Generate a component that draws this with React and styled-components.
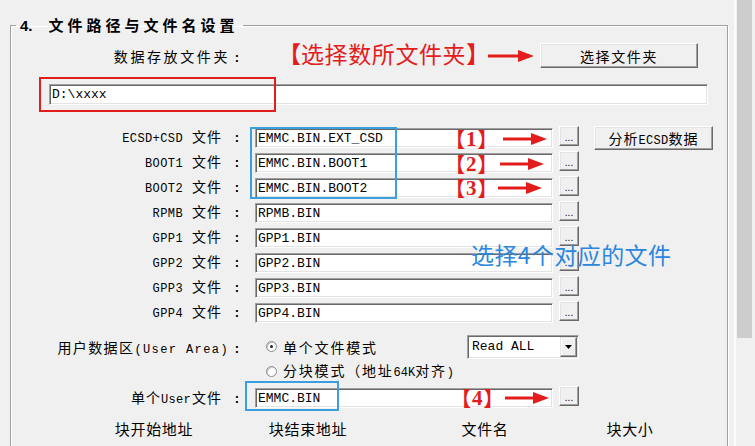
import React from 'react';
import styled, { createGlobalStyle } from 'styled-components';

const CJK = `"Noto Sans CJK SC", "Noto Sans", sans-serif`;
const MONO = `"Liberation Mono", "DejaVu Sans Mono", monospace`;
const RED = '#e31c1c';
const BLUE_FRAME = '#3a9fdc';

const GlobalStyle = createGlobalStyle`
  html, body {
    margin: 0;
    padding: 0;
    background: #f0f0f0;
    overflow: hidden;
  }
  body {
    font-family: ${CJK};
    color: #000;
  }
  * { box-sizing: border-box; }
`;

const Window = styled.div`
  display: flex;
  width: 755px;
  height: 446px;
  overflow: hidden;
  background: #f0f0f0;
`;

const Main = styled.main`
  flex: 1;
  min-width: 0;
  padding: 16px 6px 0 10px;
`;

const GroupBox = styled.fieldset`
  margin: 0;
  padding: 0;
  min-width: 0;
  height: 480px;
  border: 1px solid #a0a0a0;
  box-shadow: 1px 1px 0 #fff, inset 1px 1px 0 #fff;
`;

const Legend = styled.legend`
  margin-left: 5px;
  padding: 0 4px;
  font-family: ${CJK};
  font-size: 15px;
  font-weight: 700;
  line-height: 18px;
  letter-spacing: 4px;
  white-space: nowrap;
`;

const LegendNum = styled.span`
  font-family: "Liberation Sans", sans-serif;
  letter-spacing: 0;
  margin-right: 16px;
`;

/* ---------- labels ---------- */

const FieldLabel = styled.div`
  flex: none;
  width: 230px;
  height: ${p => p.$h || 20}px;
  padding-top: ${p => ((p.$h || 20) - 20) / 2}px;
  margin-top: ${p => p.$offset || 0}px;
  display: flex;
  justify-content: flex-end;
  align-items: baseline;
  white-space: nowrap;
`;

const Caption = styled.span`
  font-family: ${CJK};
  font-size: 14px;
  line-height: 20px;
  letter-spacing: ${p => p.$sp ?? 1}px;
  margin-left: ${p => p.$gap || 0}px;
`;

const Code = styled.span`
  font-family: ${MONO};
  font-size: 12px;
  line-height: 20px;
  letter-spacing: ${p => p.$sp ?? 0.4}px;
  margin-left: ${p => p.$gap || 0}px;
`;

const Colon = styled.span`
  display: inline-block;
  width: 8px;
  text-align: center;
  margin-left: ${p => p.$gap || 0}px;
  font-family: ${MONO};
  font-size: 13px;
  font-weight: 700;
  line-height: 20px;
`;

/* ---------- classic controls ---------- */

const TextField = styled.input.attrs({ type: 'text', readOnly: true })`
  flex: none;
  width: ${p => p.$w}px;
  height: ${p => p.$h || 20}px;
  margin: ${p => p.$mt || 0}px 0 0 ${p => p.$ml || 0}px;
  padding: 0 2px;
  background: #fff;
  border-top: 1px solid #a0a0a0;
  border-left: 1px solid #a0a0a0;
  border-right: 1px solid #fff;
  border-bottom: 1px solid #fff;
  box-shadow: inset 1px 1px 0 #696969, inset -1px -1px 0 #e3e3e3;
  font-family: ${MONO};
  font-size: 13px;
  color: #000;
  outline: none;
`;

const PushButton = styled.button`
  flex: none;
  width: ${p => p.$w}px;
  height: ${p => p.$h}px;
  margin-left: ${p => p.$ml || 0}px;
  padding: 0;
  background: #f0f0f0;
  border-top: 1px solid #fff;
  border-left: 1px solid #fff;
  border-right: 1px solid #696969;
  border-bottom: 1px solid #696969;
  box-shadow: inset -1px -1px 0 #a0a0a0, inset 1px 1px 0 #e3e3e3;
  font-family: ${CJK};
  font-size: 14px;
  letter-spacing: ${p => p.$sp ?? 1.6}px;
  color: #000;
  white-space: nowrap;
`;

const ButtonCode = styled.span`
  font-family: ${MONO};
  font-size: 12px;
  letter-spacing: 0.3px;
`;

const BrowseButton = styled(PushButton).attrs({ $w: 20, $h: 20, $ml: 6 })`
  font-family: "Liberation Sans", sans-serif;
  font-size: 10px;
  letter-spacing: 0;
  padding-top: 3px;
`;

const DropList = styled.div`
  flex: none;
  display: flex;
  align-items: center;
  justify-content: space-between;
  width: 112px;
  height: 24px;
  padding: 0 1px 0 4px;
  background: #fff;
  border-top: 1px solid #a0a0a0;
  border-left: 1px solid #a0a0a0;
  border-right: 1px solid #fff;
  border-bottom: 1px solid #fff;
  box-shadow: inset 1px 1px 0 #696969, inset -1px -1px 0 #e3e3e3;
  font-family: ${MONO};
  font-size: 13px;
`;

const DropButton = styled.span`
  display: flex;
  align-items: center;
  justify-content: center;
  width: 17px;
  height: 20px;
  background: #f0f0f0;
  border-top: 1px solid #e3e3e3;
  border-left: 1px solid #e3e3e3;
  border-right: 1px solid #696969;
  border-bottom: 1px solid #696969;
  box-shadow: inset -1px -1px 0 #a0a0a0, inset 1px 1px 0 #fff;
`;

const RadioChoice = styled.label`
  display: flex;
  align-items: center;
  padding-left: 11px;
  white-space: nowrap;
`;

const RadioText = styled.span`
  font-family: ${CJK};
  font-size: 14px;
  letter-spacing: 1.8px;
  line-height: 20px;
`;

const RadioRing = styled.span`
  position: relative;
  flex: none;
  width: 11px;
  height: 11px;
  margin-right: 6px;
  border-radius: 50%;
  border: 1px solid #8c8c8c;
  background: #fff;
  box-shadow: inset 1px 1px 0 #c8c8c8;

  &::after {
    content: '';
    display: ${p => (p.$on ? 'block' : 'none')};
    position: absolute;
    left: 3px;
    top: 3px;
    width: 3px;
    height: 3px;
    border-radius: 50%;
    background: #222;
  }
`;

/* ---------- layout rows ---------- */

const FolderRow = styled.div`
  display: flex;
  align-items: center;
  height: 25px;
  margin-top: 8px;
`;

const PathRow = styled.div`
  position: relative;
  display: flex;
  margin-top: 16px;
  padding-left: 38px;
`;

const FileList = styled.div`
  position: relative;
  display: flex;
  flex-direction: column;
  margin-top: 21px;
`;

const FileRow = styled.div`
  position: relative;
  display: flex;
  align-items: flex-start;
  height: 25px;
  margin-top: ${p => p.$top || 0}px;
`;

const ModeRow = styled.div`
  display: flex;
  align-items: flex-start;
  margin-top: 8px;
`;

const ModeOptions = styled.div`
  display: flex;
  flex-direction: column;
  width: 324px;
  margin-left: 14px;
`;

const OptionLine = styled.div`
  display: flex;
  align-items: center;
  justify-content: space-between;
  height: ${p => p.$h}px;
`;

const HeaderRow = styled.div`
  display: grid;
  grid-template-columns: 154px 154px 200px 90px;
  margin-top: 8px;
  padding-left: 66px;
`;

const HeaderCell = styled.div`
  text-align: center;
  font-family: ${CJK};
  font-size: 15px;
  line-height: 20px;
  letter-spacing: 0.7px;
`;

/* ---------- annotations drawn over the form ---------- */

const Remark = styled.span`
  flex: none;
  display: flex;
  align-items: center;
  width: 200px;
  margin: 0 0 6px 47px;
  font-family: ${CJK};
  font-size: 23px;
  line-height: 24px;
  letter-spacing: 0.6px;
  color: ${RED};
  white-space: nowrap;
`;

const Frame = styled.div`
  position: absolute;
  left: ${p => p.$x}px;
  top: ${p => p.$y}px;
  width: ${p => p.$w}px;
  height: ${p => p.$h}px;
  border: 2px solid ${p => p.$color};
  pointer-events: none;
`;

const Callout = styled.div`
  position: absolute;
  left: ${p => p.$x}px;
  top: ${p => p.$y}px;
  display: flex;
  align-items: center;
  gap: ${p => p.$gap}px;
  pointer-events: none;
`;

const Tag = styled.span`
  display: flex;
  align-items: center;
  height: 20px;
  color: ${RED};
`;

const Bracket = styled.span`
  font-family: ${CJK};
  font-weight: 700;
  font-size: ${p => p.$size || 20}px;
  line-height: 20px;
  letter-spacing: 0;
  margin: ${p => {
    const m = Math.round((p.$size || 20) * 0.45);
    return p.$open ? `0 0 0 -${m}px` : `0 -${m}px 0 0`;
  }};
`;

const Digit = styled.span`
  font-family: "Liberation Serif", serif;
  font-weight: 700;
  font-size: 21px;
  line-height: 20px;
  padding: 0 1px;
`;

const Hint = styled.div`
  position: absolute;
  left: 460px;
  top: 117px;
  font-family: ${CJK};
  font-size: 23px;
  line-height: 23px;
  letter-spacing: 0.4px;
  color: #2b86de;
  white-space: nowrap;
  pointer-events: none;
`;

const ScrollBar = styled.div`
  flex: none;
  width: 21px;
  padding: 0 3px 0 1px;
  background: #f0f0f0;
  border-left: 2px solid #fbfbfb;
`;

const Thumb = styled.div`
  width: 15px;
  height: 338px;
  background: #cdcdcd;
`;

function Arrow({ width = 46 }) {
  return (
    <svg width={width} height="14" viewBox={`0 0 ${width} 14`} style={{ flex: 'none' }}>
      <line x1="0" y1="7" x2={width - 14} y2="7" stroke={RED} strokeWidth="3" />
      <polygon points={`${width - 16},1 ${width},7 ${width - 16},13`} fill={RED} />
    </svg>
  );
}

function NumberCallout({ n, x, y, gap }) {
  return (
    <Callout $x={x} $y={y} $gap={gap}>
      <Tag>
        <Bracket $open>【</Bracket>
        <Digit>{n}</Digit>
        <Bracket>】</Bracket>
      </Tag>
      <Arrow width={44} />
    </Callout>
  );
}

function Radio({ on, children }) {
  return (
    <RadioChoice>
      <RadioRing $on={on} />
      <RadioText>{children}</RadioText>
    </RadioChoice>
  );
}

const files = [
  { code: 'ECSD+CSD', value: 'EMMC.BIN.EXT_CSD', note: { n: 1, y: 3, gap: 14 }, analyze: true },
  { code: 'BOOT1', value: 'EMMC.BIN.BOOT1', note: { n: 2, y: 3, gap: 11 } },
  { code: 'BOOT2', value: 'EMMC.BIN.BOOT2', note: { n: 3, y: 2, gap: 9 } },
  { code: 'RPMB', value: 'RPMB.BIN' },
  { code: 'GPP1', value: 'GPP1.BIN' },
  { code: 'GPP2', value: 'GPP2.BIN' },
  { code: 'GPP3', value: 'GPP3.BIN' },
  { code: 'GPP4', value: 'GPP4.BIN' },
];

export default function App() {
  return (
    <Window>
      <GlobalStyle />
      <Main>
        <GroupBox>
          <Legend>
            <LegendNum>4.</LegendNum>文件路径与文件名设置
          </Legend>

          <FolderRow>
            <FieldLabel>
              <Caption $sp={2.6}>数据存放文件夹</Caption>
              <Colon $gap={3}>:</Colon>
            </FieldLabel>
            <Remark>
              <Bracket $open $size={23}>【</Bracket>
              选择数所文件夹
              <Bracket $size={23}>】</Bracket>
            </Remark>
            <Arrow width={46} />
            <PushButton $w={158} $h={25} $ml={6}>选择文件夹</PushButton>
          </FolderRow>

          <PathRow>
            <TextField $w={659} $h={21} defaultValue="D:\xxxx" />
            <Frame $color={RED} $x={28} $y={-7} $w={237} $h={35} />
          </PathRow>

          <FileList>
            {files.map(f => (
              <FileRow key={f.code}>
                <FieldLabel $offset={0}>
                  <Code>{f.code}</Code>
                  <Caption $gap={9}>文件</Caption>
                  <Colon $gap={11}>:</Colon>
                </FieldLabel>
                <TextField $w={298} $mt={2} $ml={14} defaultValue={f.value} />
                <BrowseButton>...</BrowseButton>
                {f.analyze && (
                  <PushButton $w={119} $h={24} $ml={15} $sp={1}>
                    分析<ButtonCode>ECSD</ButtonCode>数据
                  </PushButton>
                )}
                {f.note && <NumberCallout n={f.note.n} x={443} y={f.note.y} gap={f.note.gap} />}
              </FileRow>
            ))}
            <Frame $color={BLUE_FRAME} $x={239} $y={1} $w={147} $h={72} />
            <Hint>选择4个对应的文件</Hint>
          </FileList>

          <ModeRow>
            <FieldLabel $h={25}>
              <Caption $sp={1.4}>用户数据区</Caption>
              <Code $sp={1.4}>(User Area)</Code>
              <Colon $gap={4}>:</Colon>
            </FieldLabel>
            <ModeOptions>
              <OptionLine $h={25}>
                <Radio on>单个文件模式</Radio>
                <DropList role="combobox">
                  Read ALL
                  <DropButton>
                    <svg width="7" height="4" viewBox="0 0 7 4">
                      <polygon points="0,0 7,0 3.5,4" fill="#000" />
                    </svg>
                  </DropButton>
                </DropList>
              </OptionLine>
              <OptionLine $h={24}>
                <Radio>
                  分块模式（地址<Code $sp={0}>64K</Code>对齐<Code $sp={0}>)</Code>
                </Radio>
              </OptionLine>
            </ModeOptions>
          </ModeRow>

          <FileRow $top={3}>
            <FieldLabel $offset={1}>
              <Caption>单个</Caption>
              <Code $sp={0.3}>User</Code>
              <Caption $gap={1}>文件</Caption>
              <Colon $gap={11}>:</Colon>
            </FieldLabel>
            <TextField $w={298} $mt={2} $ml={14} defaultValue="EMMC.BIN" />
            <BrowseButton>...</BrowseButton>
            <Frame $color={BLUE_FRAME} $x={234} $y={-5} $w={94} $h={30} />
            <NumberCallout n={4} x={449} y={2} gap={10} />
          </FileRow>

          <HeaderRow>
            <HeaderCell>块开始地址</HeaderCell>
            <HeaderCell>块结束地址</HeaderCell>
            <HeaderCell>文件名</HeaderCell>
            <HeaderCell>块大小</HeaderCell>
          </HeaderRow>
        </GroupBox>
      </Main>
      <ScrollBar>
        <Thumb />
      </ScrollBar>
    </Window>
  );
}
